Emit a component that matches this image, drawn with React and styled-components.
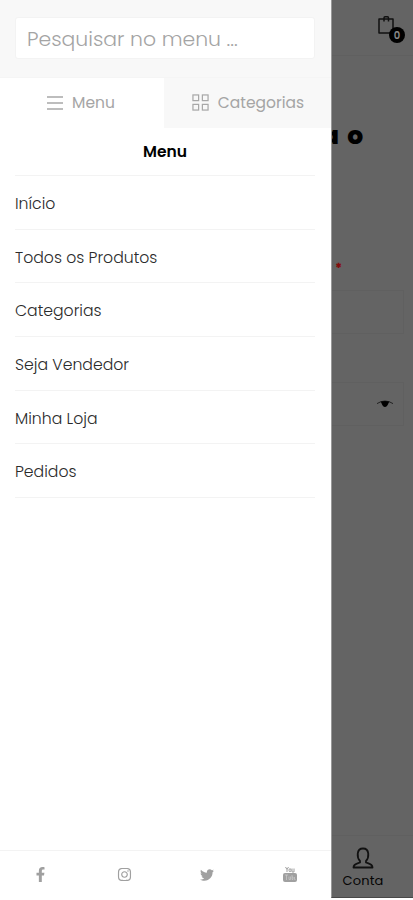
import React from 'react'
import styled, { createGlobalStyle } from 'styled-components'
import { FaFacebookF, FaInstagram, FaTwitter } from 'react-icons/fa'

const GlobalStyle = createGlobalStyle`
  * {
    box-sizing: border-box;
  }

  body {
    margin: 0;
    background: #fff;
    font-family: Poppins, Inter, sans-serif;
  }
`

const Screen = styled.div`
  display: flex;
  width: 413px;
  height: 900px;
  overflow: hidden;
`

const Drawer = styled.aside`
  display: flex;
  flex-direction: column;
  flex: 0 0 331px;
  background: #fff;
`

const SearchBar = styled.div`
  height: 78px;
  padding: 17px 16px 0 15px;
  background: #f8f8f8;
  border-bottom: 1px solid #f5f5f5;
`

const SearchInput = styled.input`
  display: block;
  width: 100%;
  height: 42px;
  padding: 2px 10px 0 11px;
  border: 1px solid #f3f3f3;
  border-radius: 3px;
  background: #fff;
  color: #777;
  font: 300 20.4px Poppins, Inter, sans-serif;
  outline: none;

  &::placeholder {
    color: #a4a4a4;
    opacity: 1;
  }
`

const Tabs = styled.div`
  display: flex;
  height: 50px;
`

const Tab = styled.button`
  display: flex;
  align-items: center;
  justify-content: center;
  gap: 9px;
  width: ${props => props.$width};
  padding: 0 ${props => props.$right || '0'} 1px ${props => props.$left || '0'};
  border: 0;
  background: ${props => (props.$active ? '#fff' : '#f8f8f8')};
  color: #a5a5a5;
  font: 400 15.5px Poppins, Inter, sans-serif;
`

const Heading = styled.h2`
  height: 48px;
  margin: 0 16px 0 15px;
  border-bottom: 1px solid #f3f3f3;
  color: #000;
  font-size: 15.5px;
  font-weight: 600;
  line-height: 47px;
  text-align: center;
`

const MenuList = styled.ul`
  flex: 1;
  margin: 0;
  padding: 0 16px 0 15px;
  list-style: none;
`

const MenuItem = styled.li`
  height: 53.7px;
  border-bottom: 1px solid #f3f3f3;
  color: #2b2b2b;
  font-size: 15.7px;
  font-weight: 300;
  line-height: 55px;
`

const Socials = styled.div`
  display: flex;
  align-items: center;
  justify-content: space-between;
  height: 50px;
  padding: 0 34px 2px 33px;
  border-top: 1px solid #f3f3f3;
  color: #a0a0a0;
`

const Shaded = styled.div`
  display: flex;
  flex-direction: column;
  flex: 1;
  height: 898px;
  min-width: 0;
  overflow: hidden;
  background: #646464;
  border-left: 1px solid #999;
  border-bottom: 1px solid #484848;
  color: #050505;
`

const Header = styled.div`
  display: flex;
  justify-content: flex-end;
  height: 56px;
  padding: 15px 8px 0 0;
  border-bottom: 1px solid #606060;
`

const Cart = styled.div`
  position: relative;
  width: 28px;
  height: 30px;
`

const Badge = styled.span`
  position: absolute;
  top: 12px;
  left: 12px;
  width: 16px;
  height: 16px;
  border-radius: 50%;
  background: #000;
  color: #888;
  font-size: 10px;
  font-weight: 600;
  line-height: 17px;
  text-align: center;
`

const Title = styled.h1`
  display: flex;
  justify-content: flex-end;
  height: 190px;
  margin: 0;
  padding: 62px 48px 0 0;
  color: #000;
  font-size: 25px;
  font-weight: 800;
  letter-spacing: 1.8px;
  line-height: 36px;
  white-space: pre;
`

const Required = styled.span`
  height: 44px;
  padding: 13px 0 0 3px;
  color: #830d0d;
  font-size: 13px;
  font-weight: 800;
  line-height: 20px;
`

const Field = styled.div`
  display: flex;
  align-items: center;
  justify-content: flex-end;
  height: 44px;
  margin: 0 9px ${props => props.$gap || '0'} 0;
  padding-right: 9px;
  border: 1px solid #606060;
  border-left: 0;
`

const Account = styled.div`
  display: flex;
  flex-direction: column;
  align-items: center;
  height: 62px;
  margin-top: auto;
  padding: 11px 19px 0 0;
  border-top: 1px solid #606060;
  font-size: 13px;
  letter-spacing: 0.2px;
  line-height: 24px;
`

const MenuIcon = () => (
  <svg width="16" height="14" viewBox="0 0 16 14" fill="none" stroke="#a8a8a8" strokeWidth="1.3">
    <path d="M0 1h16M0 7h16M0 13h16" />
  </svg>
)

const GridIcon = () => (
  <svg width="17" height="17" viewBox="0 0 18 18" fill="none" stroke="#a8a8a8" strokeWidth="1.3">
    <rect x="1" y="1" width="6" height="6" />
    <rect x="11" y="1" width="6" height="6" />
    <rect x="1" y="11" width="6" height="6" />
    <rect x="11" y="11" width="6" height="6" />
  </svg>
)

const BagIcon = () => (
  <svg width="19" height="20" viewBox="0 0 19 20" fill="none" stroke="#111" strokeWidth="1.5">
    <path d="M2 4h14v14H2z" strokeLinejoin="round" />
    <path d="M7 6.500V3Q7 1.800 8 1.800h2.500Q11.500 1.800 11.500 3v3.500" />
  </svg>
)

const EyeIcon = () => (
  <svg width="18" height="8" viewBox="0 0 18 8">
    <path d="M1 3.6Q9-1.6 17 3.6" fill="none" stroke="#222" strokeWidth="1" />
    <path d="M4.500 1.800Q9 0 13.500 1.800C12 3 12 7 9 7S6 3 4.500 1.800Z" fill="#000" />
  </svg>
)

const UserIcon = () => (
  <svg width="22" height="22" viewBox="0 0 22 22" fill="none" stroke="#111" strokeWidth="1.8" strokeLinejoin="round">
    <path d="M8 14C5 11 4 1.500 11 1.500S17 11 14 14V15.500C16 16.500 20.500 16.500 20.500 20.500H1.500C1.500 16.500 6 16.500 8 15.500Z" />
  </svg>
)

const YoutubeIcon = () => (
  <svg width="14" height="17" viewBox="0 0 14 17" fill="none" stroke="#a0a0a0">
    <path d="M2.500 1l1.500 2.500L5.500 1M4 3.500V6M11 2.500V6H9V2.500" />
    <ellipse cx="7" cy="4.200" rx="1" ry="1.600" />
    <rect x="0" y="7" width="14" height="9" rx="2" fill="#a0a0a0" stroke="none" />
    <path d="M2 9h3M3.500 9v5M6 10.500v3h1.500v-3M9 9v4.500h1v-2.500H9M11.500 11v2.500h1" stroke="#ccc" strokeWidth=".7" />
  </svg>
)

const items = ['Início', 'Todos os Produtos', 'Categorias', 'Seja Vendedor', 'Minha Loja', 'Pedidos']

export default class App extends React.Component {

  render() {

    return (
      <>
        <GlobalStyle />
        <Screen>
          <Drawer>
            <SearchBar>
              <SearchInput placeholder="Pesquisar no menu ..." />
            </SearchBar>
            <Tabs>
              <Tab $active $width="164px" $right="2px"><MenuIcon />Menu</Tab>
              <Tab $width="167px" $left="1px"><GridIcon />Categorias</Tab>
            </Tabs>
            <Heading>Menu</Heading>
            <MenuList>
              {items.map(item => <MenuItem key={item}>{item}</MenuItem>)}
            </MenuList>
            <Socials>
              <FaFacebookF size={15} />
              <FaInstagram size={15} />
              <FaTwitter size={14} />
              <YoutubeIcon />
            </Socials>
          </Drawer>
          <Shaded>
            <Header>
              <Cart>
                <BagIcon />
                <Badge>0</Badge>
              </Cart>
            </Header>
            <Title>a o</Title>
            <Required>*</Required>
            <Field $gap="48px" />
            <Field><EyeIcon /></Field>
            <Account>
              <UserIcon />
              Conta
            </Account>
          </Shaded>
        </Screen>
      </>
    )
  }
}
